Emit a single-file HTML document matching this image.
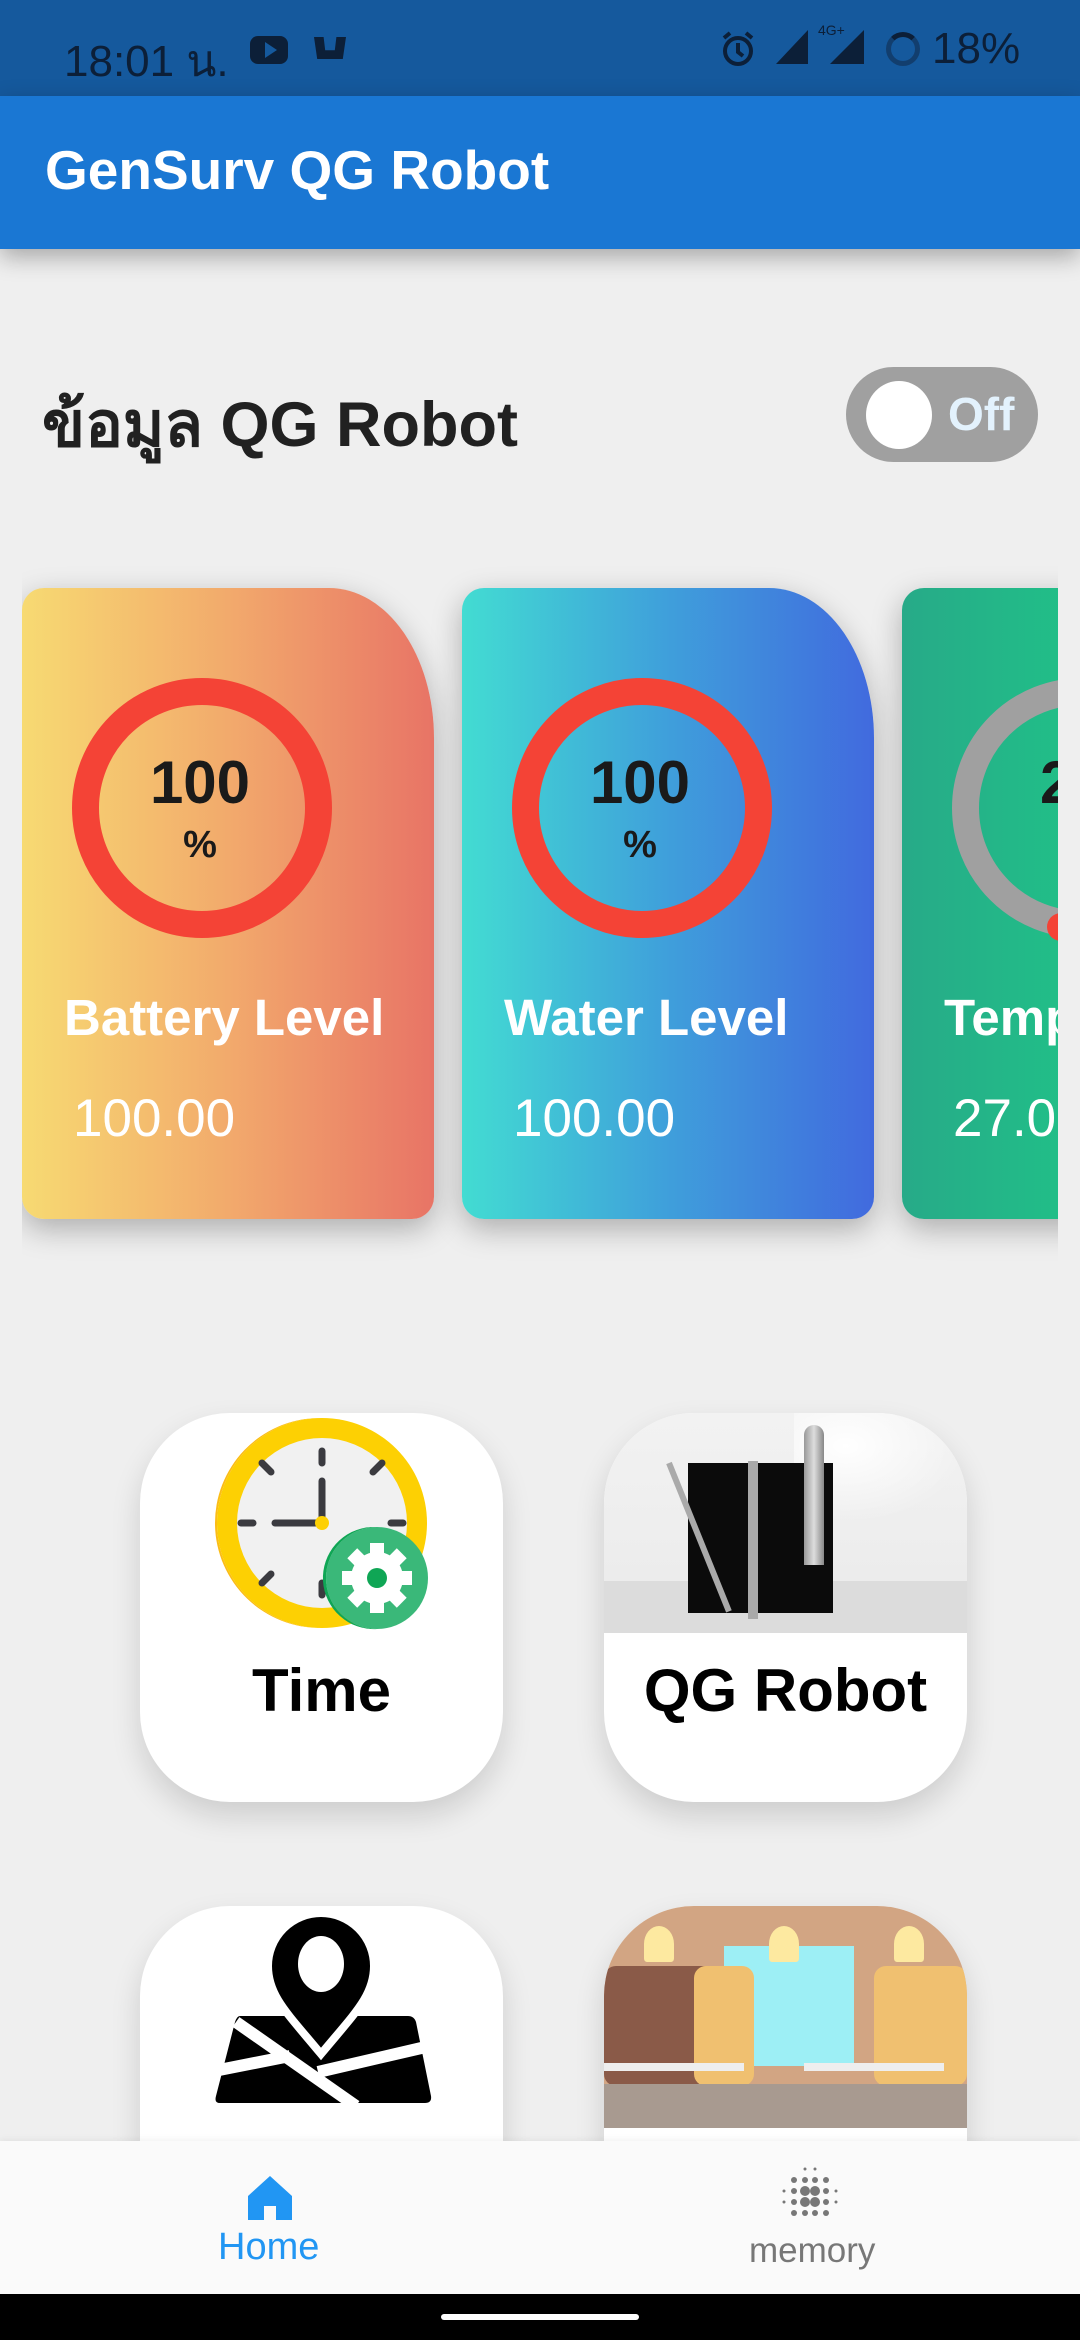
<!DOCTYPE html>
<html><head><meta charset="utf-8">
<style>
*{margin:0;padding:0;box-sizing:border-box}
body{width:1080px;height:2340px;background:#efefef;font-family:"Liberation Sans","Noto Sans CJK SC",sans-serif;position:relative;overflow:hidden}
.abs{position:absolute}
#status{left:0;top:0;width:1080px;height:96px;background:#15599d;color:#0c1f38}
#appbar{left:0;top:96px;width:1080px;height:153px;background:#1a77d3;box-shadow:0 8px 22px rgba(0,0,0,.3)}
#appbar span{position:absolute;left:45px;top:42px;color:#fff;font-size:55px;font-weight:bold;letter-spacing:0px}
.h{left:42px;top:374px;font-size:63px;font-weight:bold;color:#212121;font-family:"Liberation Sans","Noto Sans CJK SC","DejaVu Sans",sans-serif}
.tog{left:846px;top:367px;width:192px;height:95px;border-radius:48px;background:#a0a0a0}
.tog .k{position:absolute;left:20px;top:14px;width:66px;height:68px;border-radius:50%;background:#fff}
.tog span{position:absolute;left:102px;top:20px;font-size:46px;font-weight:bold;color:#e3f2fd}
#car{left:22px;top:540px;width:1036px;height:725px;overflow:hidden}
.card{position:absolute;top:48px;width:412px;height:631px;border-radius:22px 105px 22px 22px/22px 150px 22px 22px;box-shadow:0 10px 30px rgba(0,0,0,.28)}
.ring{position:absolute;left:50px;top:90px;width:260px;height:260px;border-radius:50%;border:27px solid #f44336}
.num{position:absolute;left:0;width:412px;text-align:center;font-weight:bold;color:#1a1a1a}
.lab{position:absolute;left:42px;top:400px;font-size:51px;font-weight:bold;color:#fff;white-space:nowrap}
.val{position:absolute;left:51px;top:500px;font-size:53px;color:#fff;white-space:nowrap}
.tile{position:absolute;width:363px;height:389px;background:#fff;border-radius:90px;box-shadow:0 14px 30px rgba(0,0,0,.14);overflow:hidden}
.tile .t{position:absolute;left:0;width:100%;text-align:center;top:243px;font-size:60px;font-weight:bold;color:#000}
#nav{left:0;top:2141px;width:1080px;height:153px;background:#fafafa;box-shadow:0 -2px 6px rgba(0,0,0,.05)}
#bar{left:0;top:2294px;width:1080px;height:46px;background:#000}
</style></head><body>

<div id="status" class="abs">
  <span class="abs" style="left:64px;top:26px;font-size:44px;">18:01 น.</span>
  <div class="abs" style="left:250px;top:36px;width:38px;height:28px;background:#0c1f38;border-radius:8px"></div>
  <div class="abs" style="left:265px;top:42px;width:0;height:0;border-left:12px solid #15599d;border-top:8px solid transparent;border-bottom:8px solid transparent"></div>
  <div class="abs" style="left:314px;top:37px;width:32px;height:22px;background:#0c1f38;clip-path:polygon(0 0,30% 0,35% 60%,65% 60%,70% 0,100% 0,90% 100%,10% 100%)"></div>
  <svg class="abs" style="left:720px;top:30px" width="36" height="38" viewBox="0 0 36 38"><circle cx="18" cy="21" r="13" fill="none" stroke="#0c1f38" stroke-width="4"/><path d="M18 13v9l5 4M4 8l6-5M32 8l-6-5" stroke="#0c1f38" stroke-width="4" fill="none"/></svg>
  <div class="abs" style="left:776px;top:30px;width:32px;height:34px;background:#0c1f38;clip-path:polygon(100% 0,100% 100%,0 100%)"></div>
  <span class="abs" style="left:818px;top:22px;font-size:14px;color:#0c1f38">4G+</span>
  <div class="abs" style="left:830px;top:30px;width:34px;height:34px;background:#0c1f38;clip-path:polygon(100% 0,100% 100%,0 100%)"></div>
  <div class="abs" style="left:886px;top:32px;width:34px;height:34px;border-radius:50%;border:5px solid #123e6e;border-top-color:#0c1f38"></div>
  <span class="abs" style="left:932px;top:24px;font-size:44px;">18%</span>
</div>

<div id="appbar" class="abs"><span>GenSurv QG Robot</span></div>

<div class="abs h">ข้อมูล QG Robot</div>
<div class="abs tog"><div class="k"></div><span>Off</span></div>

<div id="car" class="abs">
  <div class="card" style="left:0;background:linear-gradient(90deg,#f7da72,#f2aa6c 50%,#e87466)">
    <div class="ring"></div>
    <div class="num" style="top:160px;left:-28px;font-size:60px">100</div>
    <div class="num" style="top:236px;left:-28px;font-size:38px">%</div>
    <div class="lab">Battery Level</div>
    <div class="val">100.00</div>
  </div>
  <div class="card" style="left:440px;background:linear-gradient(90deg,#42dcd2,#3f9fdb 50%,#416ade)">
    <div class="ring"></div>
    <div class="num" style="top:160px;left:-28px;font-size:60px">100</div>
    <div class="num" style="top:236px;left:-28px;font-size:38px">%</div>
    <div class="lab">Water Level</div>
    <div class="val">100.00</div>
  </div>
  <div class="card" style="left:880px;background:linear-gradient(90deg,#27aa88,#1ec987 60%)">
    <div class="ring" style="border-color:#a0a0a0"></div>
    <div class="abs" style="left:145px;top:325px;width:28px;height:28px;border-radius:50%;background:#f44336"></div>
    <div class="num" style="top:160px;left:-22px;font-size:60px;text-align:left;padding-left:160px">27</div>
    <div class="lab">Temperature</div>
    <div class="val">27.00</div>
  </div>
</div>

<!-- tile 1 Time -->
<div class="tile" style="left:140px;top:1413px">
  <svg class="abs" style="left:0;top:0" width="363" height="240" viewBox="0 0 363 240">
    <circle cx="182" cy="110" r="105" fill="#fdd003"/>
    <path d="M182 5a105 105 0 0 0 0 210a105 105 0 0 1 -4-210z" fill="#fbbd17"/>
    <circle cx="182" cy="110" r="85" fill="#f1f1f1"/>
    <g stroke="#3b3b40" stroke-width="7" stroke-linecap="round">
      <line x1="182" y1="38" x2="182" y2="50"/><line x1="182" y1="68" x2="182" y2="110"/><line x1="182" y1="110" x2="135" y2="110"/>
      <line x1="101" y1="110" x2="113" y2="110"/><line x1="251" y1="110" x2="263" y2="110"/>
      <line x1="122" y1="50" x2="131" y2="59"/><line x1="242" y1="50" x2="233" y2="59"/>
      <line x1="122" y1="170" x2="131" y2="161"/><line x1="182" y1="170" x2="182" y2="182"/>
    </g>
    <circle cx="182" cy="110" r="7" fill="#fdd003"/>
    <circle cx="237" cy="165" r="51" fill="#3ab879"/>
    <path d="M237 114a51 51 0 0 0 0 102a51 51 0 0 1 -6-102z" fill="#0fa655"/>
    <g transform="translate(237 165)" fill="#fff">
      <circle r="26"/>
      <g id="tt"><rect x="-7" y="-35" width="14" height="14"/></g>
      <use href="#tt" transform="rotate(45)"/><use href="#tt" transform="rotate(90)"/><use href="#tt" transform="rotate(135)"/>
      <use href="#tt" transform="rotate(180)"/><use href="#tt" transform="rotate(225)"/><use href="#tt" transform="rotate(270)"/><use href="#tt" transform="rotate(315)"/>
      <circle r="10" fill="#0fa655"/>
    </g>
  </svg>
  <div class="t">Time</div>
</div>

<!-- tile 2 QG Robot -->
<div class="tile" style="left:604px;top:1413px">
  <div class="abs" style="left:0;top:0;width:363px;height:168px;background:linear-gradient(#f2f2f2,#ececec)"></div>
  <div class="abs" style="left:0;top:168px;width:363px;height:52px;background:#dcdcdc"></div>
  <div class="abs" style="left:190px;top:0;width:173px;height:110px;background:radial-gradient(ellipse at 30% 30%,#fff,rgba(255,255,255,0) 70%)"></div>
  <div class="abs" style="left:84px;top:50px;width:145px;height:150px;background:#0b0b0b"></div>
  <div class="abs" style="left:144px;top:48px;width:10px;height:158px;background:#a9a9a9"></div>
  <div class="abs" style="left:200px;top:12px;width:20px;height:140px;background:linear-gradient(90deg,#999,#ddd,#888);border-radius:10px 10px 0 0"></div>
  <div class="abs" style="left:62px;top:50px;width:6px;height:160px;background:#aaa;transform:rotate(-22deg);transform-origin:top"></div>
  <div style="position:absolute;left:0;width:100%;text-align:center;top:243px;font-size:60px;font-weight:bold;color:#000">QG Robot</div>
</div>

<!-- tile 3 map -->
<div class="tile" style="left:140px;top:1906px">
  <svg class="abs" style="left:0;top:0" width="363" height="235" viewBox="0 0 363 235">
    <path d="M100 110H268Q274 110 276 116L291 190Q292 197 285 197H80Q74 197 76 190L95 116Q97 110 100 110z" fill="#000"/>
    <g stroke="#fff" stroke-width="12" fill="none">
      <line x1="96" y1="116" x2="216" y2="200"/>
      <line x1="74" y1="165" x2="150" y2="150"/>
      <line x1="178" y1="166" x2="290" y2="140"/>
    </g>
    <path d="M181 148C148 108 128 90 128 60a53 53 0 0 1 106 0c0 30-20 48-53 88z" fill="#000" stroke="#fff" stroke-width="8"/>
    <ellipse cx="181" cy="58" rx="23" ry="28" fill="#fff"/>
  </svg>
</div>

<!-- tile 4 library -->
<div class="tile" style="left:604px;top:1906px">
  <div class="abs" style="left:0;top:0;width:363px;height:222px;background:#d2a583"></div>
  <div class="abs" style="left:120px;top:40px;width:130px;height:120px;background:#9deff5"></div>
  <div class="abs" style="left:0;top:60px;width:110px;height:120px;background:#8a5a48;border-radius:12px"></div>
  <div class="abs" style="left:90px;top:60px;width:60px;height:120px;background:#f0c070;border-radius:12px"></div>
  <div class="abs" style="left:270px;top:60px;width:93px;height:120px;background:#f0c070;border-radius:12px"></div>
  <div class="abs" style="left:0;top:178px;width:363px;height:44px;background:#a89a90"></div>
  <div class="abs" style="left:0;top:157px;width:140px;height:8px;background:#eee"></div>
  <div class="abs" style="left:200px;top:157px;width:140px;height:8px;background:#eee"></div>
  <div class="abs" style="left:40px;top:20px;width:30px;height:36px;background:#fde9a0;border-radius:50% 50% 10% 10%"></div>
  <div class="abs" style="left:165px;top:20px;width:30px;height:36px;background:#fde9a0;border-radius:50% 50% 10% 10%"></div>
  <div class="abs" style="left:290px;top:20px;width:30px;height:36px;background:#fde9a0;border-radius:50% 50% 10% 10%"></div>
</div>

<div id="nav" class="abs">
  <svg class="abs" style="left:246px;top:33px" width="48" height="48" viewBox="0 0 48 48"><path d="M24 2L2 22v24h16V32h12v14h16V22z" fill="#2196f3"/></svg>
  <span class="abs" style="left:218px;top:85px;font-size:38px;color:#2196f3">Home</span>
  <svg class="abs" style="left:780px;top:20px" width="60" height="60" viewBox="0 0 60 60" fill="#777">
    <circle cx="25" cy="8" r="1.5"/><circle cx="35" cy="8" r="1.5"/>
    <circle cx="14" cy="19" r="3"/><circle cx="25" cy="19" r="3"/><circle cx="35" cy="19" r="3"/><circle cx="46" cy="19" r="3"/>
    <circle cx="4" cy="30" r="1.5"/><circle cx="14" cy="30" r="3"/><circle cx="25" cy="30" r="5"/><circle cx="35" cy="30" r="5"/><circle cx="46" cy="30" r="3"/><circle cx="56" cy="30" r="1.5"/>
    <circle cx="4" cy="41" r="1.5"/><circle cx="14" cy="41" r="3"/><circle cx="25" cy="41" r="5"/><circle cx="35" cy="41" r="5"/><circle cx="46" cy="41" r="3"/><circle cx="56" cy="41" r="1.5"/>
    <circle cx="14" cy="52" r="3"/><circle cx="25" cy="52" r="3"/><circle cx="35" cy="52" r="3"/><circle cx="46" cy="52" r="3"/>
  </svg>
  <span class="abs" style="left:749px;top:90px;font-size:35px;color:#777">memory</span>
</div>
<div id="bar" class="abs"><div class="abs" style="left:441px;top:20px;width:198px;height:6px;border-radius:3px;background:#fff"></div></div>
</body></html>
